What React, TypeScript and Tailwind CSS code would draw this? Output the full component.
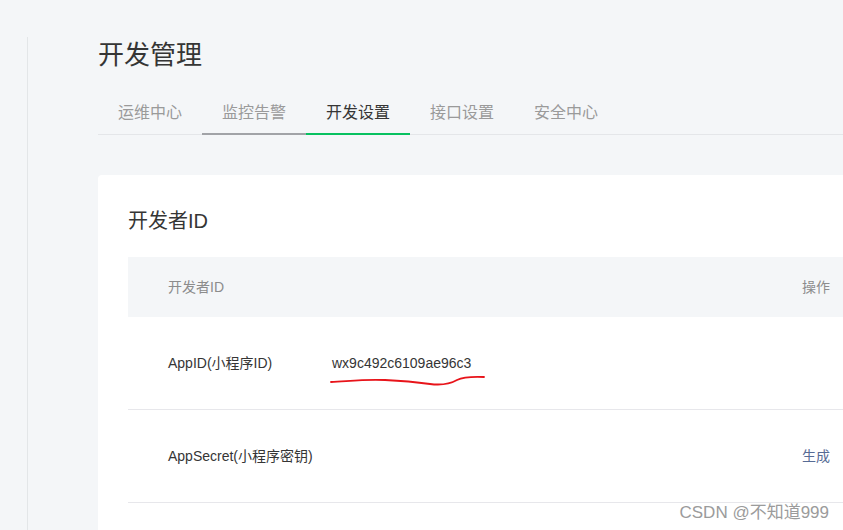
import React from 'react'

const tabs = ['运维中心', '监控告警', '开发设置', '接口设置', '安全中心']

const RedScribble: React.FC = () => (
  <svg
    className="absolute left-[-2px] top-[19px] pointer-events-none"
    width="160"
    height="14"
    viewBox="0 0 160 14"
    fill="none"
  >
    <path
      d="M1 8 C 20 7, 35 5, 55 6 C 75 7, 85 8, 100 10 C 112 11.5, 120 10, 127 6 C 133 3, 142 2.5, 154 3"
      stroke="#e8141a"
      strokeWidth="1.8"
      strokeLinecap="round"
    />
  </svg>
)

export default function App() {
  return (
    <div
      className="relative w-full h-[530px] overflow-hidden bg-[#f4f6f8] pt-[37px] flex"
      style={{ fontFamily: '"Liberation Sans", "Noto Sans CJK SC", sans-serif' }}
    >
      <div className="w-[28px] shrink-0 border-r border-[#e3e6e8]" />

      <div className="flex-1 pl-[70px]">
        <h1 className="text-[26px] leading-[36px] text-[#353535] font-normal">开发管理</h1>

        <div className="mt-[20px] flex border-b border-[#e4e6e9]">
          {tabs.map((t, i) => (
            <div
              key={t}
              className={
                'w-[104px] h-[42px] -mb-px leading-[40px] text-center text-[16px] border-b-2 ' +
                (i === 2
                  ? 'border-[#07c160] text-[#353535]'
                  : i === 1
                  ? 'border-[#a1a3a7] text-[#9a9a9a]'
                  : 'border-transparent text-[#9a9a9a]')
              }
            >
              {t}
            </div>
          ))}
        </div>

        <div className="mt-[40px] bg-white rounded-l-[4px] pl-[30px] pt-[32px] h-[400px]">
          <h2 className="text-[20px] leading-[28px] text-[#353535] font-normal">开发者ID</h2>

          <div className="mt-[22px]">
            <div className="h-[60px] bg-[#f4f6f8] flex items-center text-[14px] text-[#8c8c8c]">
              <div className="pl-[40px] flex-1">开发者ID</div>
              <div className="pr-[13px]">操作</div>
            </div>

            <div className="h-[93px] border-b border-[#e7e7eb] flex items-center text-[14px] text-[#353535]">
              <div className="pl-[40px] w-[204px]">AppID(小程序ID)</div>
              <div className="flex-1">
                <span className="relative">
                  wx9c492c6109ae96c3
                  <RedScribble />
                </span>
              </div>
            </div>

            <div className="h-[93px] border-b border-[#e7e7eb] flex items-center text-[14px] text-[#353535]">
              <div className="pl-[40px] flex-1">AppSecret(小程序密钥)</div>
              <div className="pr-[13px] text-[#576b95]">生成</div>
            </div>
          </div>
        </div>
      </div>

      <div
        className="absolute right-[14px] bottom-[5px] text-[17px] text-[#9b9b9b]"
        style={{ textShadow: '0 0 2px #fff' }}
      >
        CSDN @不知道999
      </div>
    </div>
  )
}
